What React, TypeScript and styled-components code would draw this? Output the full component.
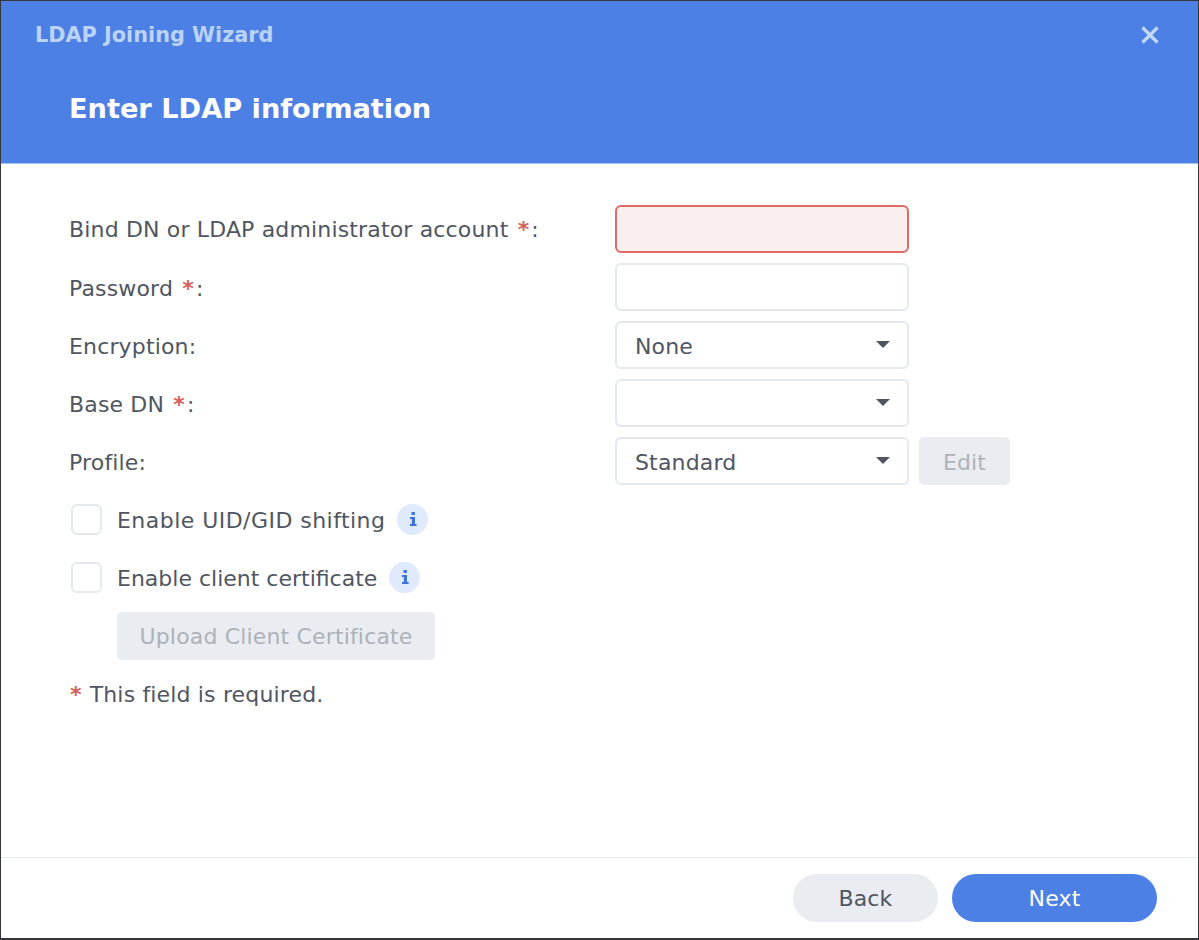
import React from "react";
import styled, { createGlobalStyle } from "styled-components";

const Global = createGlobalStyle`
  html, body { margin: 0; padding: 0; background: #fff; }
  * { box-sizing: border-box; }
`;

const Dialog = styled.div`
  width: 1199px;
  height: 940px;
  display: flex;
  flex-direction: column;
  border: 1px solid #33363b;
  border-width: 1px 1px 2px 1px;
  font-family: "DejaVu Sans", sans-serif;
  font-size: 22px;
  letter-spacing: 0.16px;
  color: #4f5661;
  background: #fff;
`;

const Header = styled.header`
  height: 163px;
  flex: none;
  background: #4c80e4;
  border-bottom: 1px solid #a9c3f2;
  display: flex;
  flex-direction: column;
  padding: 0 34px;
`;

const TitleBar = styled.div`
  height: 66px;
  display: flex;
  align-items: center;
  justify-content: space-between;
`;

const WindowTitle = styled.div`
  font-size: 20.8px;
  font-weight: 700;
  letter-spacing: 0;
  color: #bcd3f8;
  padding-top: 2px;
`;

const CloseIcon = styled.svg`
  width: 20px;
  height: 20px;
  margin-right: 4px;
  margin-top: 2px;
`;

const StepTitle = styled.h1`
  margin: 0;
  padding-left: 34px;
  font-size: 27.2px;
  letter-spacing: 0;
  line-height: 84px;
  height: 84px;
  font-weight: 700;
  color: #fff;
`;

const Body = styled.main`
  flex: 1;
  padding: 41px 68px 0;
  display: flex;
  flex-direction: column;
  gap: 10px;
`;

const Row = styled.div`
  height: 48px;
  display: flex;
  align-items: center;
`;

const Label = styled.div<{ $top?: boolean }>`
  width: 546px;
  flex: none;
  padding-top: ${(p) => (p.$top ? 1 : 3)}px;
`;

const Star = styled.span`
  color: #d65f5a;
  font-weight: 700;
  line-height: 1;
  margin: 0 2px 0 2px;
`;

const NoteStar = styled(Star)`
  margin: 0 0 0 1px;
`;

const Field = styled.div<{ $error?: boolean }>`
  width: 294px;
  height: 48px;
  flex: none;
  display: flex;
  align-items: center;
  justify-content: space-between;
  padding: 3px 17px 0 18px;
  border-radius: 6px;
  border: ${(p) => (p.$error ? "2px solid #dd6b66" : "2px solid #e4e9f1")};
  background: ${(p) => (p.$error ? "#f9efee" : "#fff")};
`;

const Caret = styled.span`
  width: 0;
  height: 0;
  border-left: 7px solid transparent;
  border-right: 7px solid transparent;
  border-top: 7px solid #4f5661;
  margin-bottom: 5px;
`;

const DisabledButton = styled.div<{ $width: number; $indent?: number; $shift?: number }>`
  width: ${(p) => p.$width}px;
  height: 48px;
  flex: none;
  margin-left: ${(p) => p.$indent ?? 0}px;
  margin-top: ${(p) => p.$shift ?? 0}px;
  display: flex;
  align-items: center;
  justify-content: center;
  padding-top: 2px;
  background: #e9ecf1;
  border-radius: 5px;
  color: #adb2b9;
`;

const CheckBox = styled.div`
  width: 31px;
  height: 31px;
  flex: none;
  margin: 0 15px 0 2px;
  border: 2px solid #e4e9f1;
  border-radius: 6px;
  background: #fff;
`;

const CheckLabel = styled.span<{ $spacing: number }>`
  letter-spacing: ${(p) => p.$spacing}px;
  padding-top: 2px;
`;

const InfoBadge = styled.div`
  width: 31px;
  height: 31px;
  border-radius: 50%;
  margin-left: 12px;
  background: #dfeafc;
  display: flex;
  align-items: center;
  justify-content: center;
`;

const Footnote = styled.div`
  height: 48px;
  display: flex;
  align-items: center;
  gap: 8px;
  padding: 3px 0 0 0;
`;

const Footer = styled.footer`
  height: 81px;
  flex: none;
  border-top: 1px solid #e6e9f0;
  display: flex;
  align-items: flex-start;
  justify-content: flex-end;
  gap: 14px;
  padding: 16px 41px 0 0;
`;

const PillButton = styled.div<{ $primary?: boolean; $width: number }>`
  width: ${(p) => p.$width}px;
  height: 48px;
  border-radius: 24px;
  display: flex;
  align-items: center;
  justify-content: center;
  background: ${(p) => (p.$primary ? "#4c80e4" : "#e9ecf1")};
  color: ${(p) => (p.$primary ? "#fff" : "#4f5661")};
`;

const Info = () => (
  <InfoBadge>
    <svg width="12" height="16" viewBox="0 0 12 16" fill="#3f74dc">
      <rect x="4.5" y="1" width="3.4" height="3" />
      <path d="M3 6h5v7h1.6v2H3v-2h1.8V8H3z" />
    </svg>
  </InfoBadge>
);

export default function App() {
  return (
    <>
      <Global />
      <Dialog>
        <Header>
          <TitleBar>
            <WindowTitle>LDAP Joining Wizard</WindowTitle>
            <CloseIcon viewBox="0 0 20 20" fill="none" stroke="#c3d8f9" strokeWidth="3.2">
              <path d="M2.5 2.5l15 15M17.5 2.5l-15 15" />
            </CloseIcon>
          </TitleBar>
          <StepTitle>Enter LDAP information</StepTitle>
        </Header>
        <Body>
          <Row>
            <Label $top>Bind DN or LDAP administrator account <Star>*</Star>:</Label>
            <Field $error />
          </Row>
          <Row>
            <Label>Password <Star>*</Star>:</Label>
            <Field />
          </Row>
          <Row>
            <Label>Encryption:</Label>
            <Field>None<Caret /></Field>
          </Row>
          <Row>
            <Label>Base DN <Star>*</Star>:</Label>
            <Field><span /><Caret /></Field>
          </Row>
          <Row>
            <Label>Profile:</Label>
            <Field>Standard<Caret /></Field>
            <DisabledButton $width={91} $indent={10}>Edit</DisabledButton>
          </Row>
          <Row>
            <CheckBox />
            <CheckLabel $spacing={0.46}>Enable UID/GID shifting</CheckLabel>
            <Info />
          </Row>
          <Row>
            <CheckBox />
            <CheckLabel $spacing={0}>Enable client certificate</CheckLabel>
            <Info />
          </Row>
          <Row>
            <DisabledButton $width={318} $indent={48} $shift={1}>Upload Client Certificate</DisabledButton>
          </Row>
          <Footnote><NoteStar>*</NoteStar>This field is required.</Footnote>
        </Body>
        <Footer>
          <PillButton $width={145}>Back</PillButton>
          <PillButton $width={205} $primary>Next</PillButton>
        </Footer>
      </Dialog>
    </>
  );
}
